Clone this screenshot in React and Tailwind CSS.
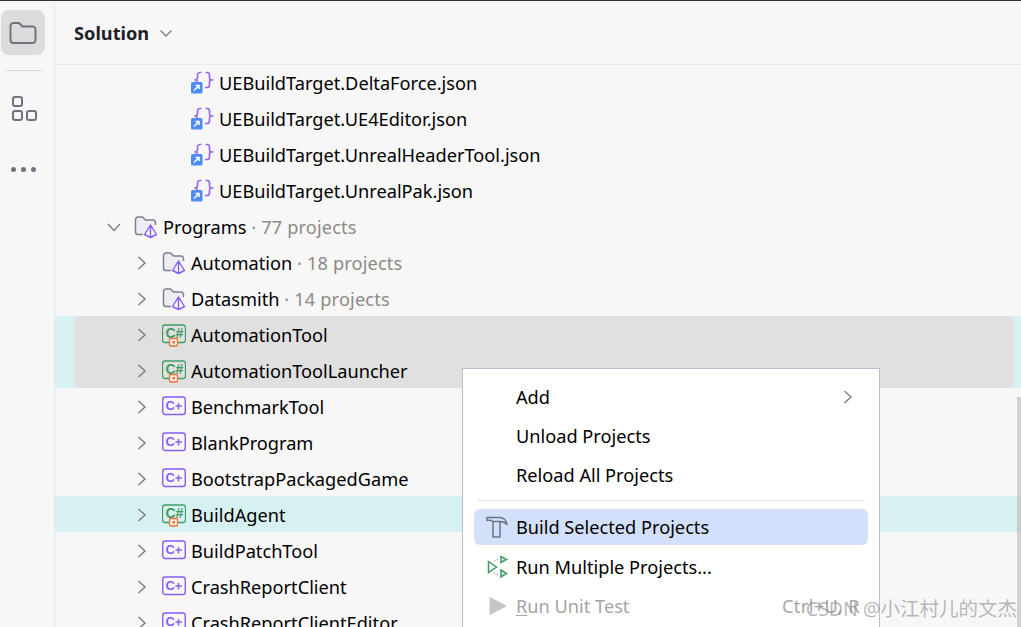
const FONT = "font-['Noto_Sans','Liberation_Sans',sans-serif]";

function Chevron({ down }) {
  return (
    <svg width="16" height="16" viewBox="0 0 16 16" fill="none" stroke="#7d8089" strokeWidth="1.5" className="shrink-0">
      {down ? <path d="M2 5l6 6.500 6-6.500" /> : <path d="M4.500 2l6.500 6-6.500 6" />}
    </svg>
  );
}

function JsonIcon() {
  return (
    <svg width="24" height="24" viewBox="0 0 24 24" fill="none" className="shrink-0">
      <path d="M11.500 1.500h-1.500a2.500 2.500 0 0 0-2.500 2.500v2.500a2.500 2.500 0 0 1-3 2.500 2.500 2.500 0 0 1 3 2.500v2" stroke="#9a67f2" strokeWidth="1.700" />
      <path d="M15.500 1.500h1.500a2.500 2.500 0 0 1 2.500 2.500v3a2 2 0 0 0 2.500 2 2 2 0 0 0-2.500 2v3a2.500 2.500 0 0 1-2.500 2.500h-2" stroke="#9a67f2" strokeWidth="1.700" />
      <rect x="1" y="11" width="11.500" height="11.500" rx="1.500" fill="#4b8cf5" />
      <path d="M4 19.500l5-5M5.500 14.500h3.500v3.500" stroke="#fff" strokeWidth="1.500" />
    </svg>
  );
}

function FolderIcon() {
  return (
    <svg width="24" height="24" viewBox="0 0 24 24" fill="none" className="shrink-0">
      <path d="M9 19.500H4a2.500 2.500 0 0 1-2.500-2.500V4.500A2.500 2.500 0 0 1 4 2h4.500l3 3H19a2.500 2.500 0 0 1 2.500 2.500V10" fill="#eceef3" stroke="#7d818e" strokeWidth="1.500" />
      <path d="M16.500 10L10.500 19.500 16.500 22.500 22.500 19.500zM16.500 10V22.500" fill="#f7f7f7" stroke="#8b5cf6" strokeWidth="1.400" strokeLinejoin="round" />
    </svg>
  );
}

function SharpIcon() {
  return (
    <svg width="24" height="24" viewBox="0 0 24 24" fill="none" className="shrink-0">
      <path d="M7 19.500H3a2.500 2.500 0 0 1-2.500-2.500V4.500A2.500 2.500 0 0 1 3 2h18a2.500 2.500 0 0 1 2.500 2.500V17a2.500 2.500 0 0 1-2.500 2.500h-5" stroke="#3f9d64" strokeWidth="1.300" />
      <text x="3.500" y="15" fontSize="14" fontWeight="700" fill="#3f9d64" fontFamily="Liberation Sans, sans-serif">C#</text>
      <rect x="7.500" y="15.500" width="8" height="7.500" rx="1" fill="#fbeee6" stroke="#e8763a" strokeWidth="1.300" />
      <rect x="10.500" y="18" width="2.500" height="2.500" fill="#e8763a" />
    </svg>
  );
}

function PlusIcon() {
  return (
    <svg width="24" height="24" viewBox="0 0 24 24" fill="none" className="shrink-0">
      <rect x="0.750" y="2" width="22.500" height="17.500" rx="2.500" stroke="#8b5cf6" strokeWidth="1.400" />
      <text x="3.500" y="15" fontSize="13" fontWeight="700" fill="#8b5cf6" fontFamily="Liberation Sans, sans-serif">C</text>
      <path d="M16.500 8v6.500M13.500 11h6.500" stroke="#8b5cf6" strokeWidth="1.500" />
    </svg>
  );
}

const icons = { json: JsonIcon, folder: FolderIcon, sharp: SharpIcon, plus: PlusIcon };

function Row({ icon, name, count, chevron, down, indent }) {
  const Icon = icons[icon];
  return (
    <div className={`flex h-9 items-center ${indent}`}>
      {chevron && (
        <span className="mr-3">
          <Chevron down={down} />
        </span>
      )}
      <Icon />
      <span className="ml-[5px] pt-0.5 whitespace-nowrap text-black">{name}</span>
      {count && <span className="pt-0.5 tracking-[0.15px] whitespace-nowrap text-[#8d8a85]">&nbsp;· {count}</span>}
    </div>
  );
}

function MenuItem({ icon, label, disabled, active, children }) {
  return (
    <div className={`flex h-9 items-center rounded-md ${active ? "bg-[#d3e0fb]" : ""}`}>
      <span className="flex w-[42px] shrink-0 justify-center">{icon}</span>
      <span className={`pt-0.5 whitespace-nowrap ${disabled ? "text-[#a5a5a5]" : "text-black"}`}>{label}</span>
      {children}
    </div>
  );
}

export default function App() {
  return (
    <div className={`relative h-[627px] w-full overflow-hidden bg-[#f7f7f7] text-[18.2px] ${FONT}`}>
      <div className="h-0.5 border-t border-[#3a2a35]" />
      <div className="flex h-[625px]">
        {/* tool strip */}
        <aside className="flex w-[55px] shrink-0 flex-col items-center border-r border-[#e6e6e6]">
          <div className="mt-2 mr-2 flex h-[45px] w-11 items-center justify-center rounded-lg bg-[#dcdcdc]">
            <svg width="28" height="24" viewBox="0 0 28 24" fill="none" stroke="#6f7381" strokeWidth="2">
              <path d="M1.500 5a3 3 0 0 1 3-3h5.500l3.500 3.500h10a3 3 0 0 1 3 3V19a3 3 0 0 1-3 3h-19a3 3 0 0 1-3-3z" strokeLinejoin="round" />
            </svg>
          </div>
          <div className="mt-[15px] mr-[7px] h-px w-9 bg-[#d8d8d8]" />
          <svg width="26" height="26" viewBox="0 0 26 26" fill="none" stroke="#6f7381" strokeWidth="2" className="mt-[25px] mr-[7px]">
            <rect x="2" y="1" width="9" height="9" rx="2" />
            <rect x="2" y="15" width="9" height="9" rx="2" />
            <rect x="16" y="15" width="9" height="9" rx="2" />
          </svg>
          <div className="mt-[45px] mr-[7px] flex gap-[5px]">
            <span className="size-[5px] rounded-full bg-[#6f7381]" />
            <span className="size-[5px] rounded-full bg-[#6f7381]" />
            <span className="size-[5px] rounded-full bg-[#6f7381]" />
          </div>
        </aside>

        {/* solution tree */}
        <main className="min-w-0 flex-1">
          <header className="flex h-[63px] items-center border-b border-[#e8e8e8] pl-[19px]">
            <span className="pt-0.5 font-bold text-[#1d1f27]">Solution</span>
            <svg width="16" height="16" viewBox="0 0 16 16" fill="none" stroke="#7d8089" strokeWidth="1.400" className="ml-[9px]">
              <path d="M2.500 5.500l5.500 5.500 5.500-5.500" />
            </svg>
          </header>

          <Row icon="json" name="UEBuildTarget.DeltaForce.json" indent="pl-[135px]" />
          <Row icon="json" name="UEBuildTarget.UE4Editor.json" indent="pl-[135px]" />
          <Row icon="json" name="UEBuildTarget.UnrealHeaderTool.json" indent="pl-[135px]" />
          <Row icon="json" name="UEBuildTarget.UnrealPak.json" indent="pl-[135px]" />
          <Row icon="folder" name="Programs" count="77 projects" chevron down indent="pl-[51px]" />
          <Row icon="folder" name="Automation" count="18 projects" chevron indent="pl-[79px]" />
          <Row icon="folder" name="Datasmith" count="14 projects" chevron indent="pl-[79px]" />

          <div className="-mt-px mb-px h-[72px] bg-[#d7f1f3] pr-[7px] pl-[19px]">
            <div className="h-[72px] rounded-md bg-[#e0e0e0] pt-px">
              <Row icon="sharp" name="AutomationTool" chevron indent="pl-[60px]" />
              <Row icon="sharp" name="AutomationToolLauncher" chevron indent="pl-[60px]" />
            </div>
          </div>

          <Row icon="plus" name="BenchmarkTool" chevron indent="pl-[79px]" />
          <Row icon="plus" name="BlankProgram" chevron indent="pl-[79px]" />
          <Row icon="plus" name="BootstrapPackagedGame" chevron indent="pl-[79px]" />
          <div className="-mt-px mb-px h-9 bg-[#d7f1f3] pt-px">
            <Row icon="sharp" name="BuildAgent" chevron indent="pl-[79px]" />
          </div>
          <Row icon="plus" name="BuildPatchTool" chevron indent="pl-[79px]" />
          <Row icon="plus" name="CrashReportClient" chevron indent="pl-[79px]" />
          <Row icon="plus" name="CrashReportClientEditor" chevron indent="pl-[79px]" />
        </main>
      </div>

      {/* scrollbar */}
      <div className="absolute top-[397px] right-0 h-[230px] w-1 bg-[#b8b8b8]/60" />

      {/* context menu */}
      <div className="absolute top-[368px] left-[462px] h-[280px] w-[418px] border border-[#b9bdd0] bg-white pt-2.5 pr-[11px] pl-[11px]">
        <div className="flex flex-col gap-[3px]">
          <MenuItem label="Add">
            <svg width="16" height="16" viewBox="0 0 16 16" fill="none" stroke="#7d8089" strokeWidth="1.400" className="mr-3 ml-auto">
              <path d="M4.500 2l6.500 6-6.500 6" />
            </svg>
          </MenuItem>
          <MenuItem label="Unload Projects" />
          <MenuItem label="Reload All Projects" />
        </div>
        <div className="mx-[3px] mt-[7px] mb-2 h-px bg-[#e6e6e6]" />
        <MenuItem
          active
          label="Build Selected Projects"
          icon={
            <svg width="24" height="24" viewBox="0 0 24 24" fill="none" stroke="#6f7381" strokeWidth="1.500" strokeLinejoin="round" className="ml-1">
              <path d="M2 2.500H15C19 2.500 21 5 22 9.500 20 7.500 18 6.500 15 6.500H8C6 5 4 5 2 5.500z" />
              <path d="M8 6.500V22H15V6.500" />
            </svg>
          }
        />
        <div className="mt-1">
          <MenuItem
            label="Run Multiple Projects..."
            icon={
              <svg width="24" height="24" viewBox="0 0 24 24" fill="none" stroke="#3f9d64" strokeWidth="1.500" className="ml-1">
                <path d="M3.500 6.500l8 5.500-8 5.500z" />
                <path d="M16 1.500l5.500 3-5.500 3zM16 15l5.500 3.500-5.500 3.500z" fill="#3f9d64" fillOpacity="0.150" />
                <path d="M9 6l4-2M9 18l4 2" stroke="#8a8f9a" strokeDasharray="1.500 1.500" strokeWidth="1" />
              </svg>
            }
          />
        </div>
        <div className="mt-[3px]">
          <MenuItem
            disabled
            label={
              <>
                <span className="underline underline-offset-2">R</span>un Unit Test
              </>
            }
            icon={
              <svg width="18" height="20" viewBox="0 0 18 20" className="ml-[6px]">
                <path d="M1 1.500L17 10 1 18.500z" fill="#c6c6c6" stroke="#c6c6c6" strokeLinejoin="round" />
              </svg>
            }
          >
            <span className="mr-[8px] ml-auto pt-0.5 tracking-[0.4px] whitespace-nowrap text-[#a5a5a5]">Ctrl+U, R</span>
          </MenuItem>
        </div>
      </div>

      {/* watermark */}
      <div className="absolute top-[597px] right-1 font-['Noto_Sans','Noto_Sans_CJK_SC',sans-serif] text-[19.5px] leading-6 whitespace-nowrap text-[#8a8a8a]/60">
        CSDN @小江村儿的文杰
      </div>
    </div>
  );
}
